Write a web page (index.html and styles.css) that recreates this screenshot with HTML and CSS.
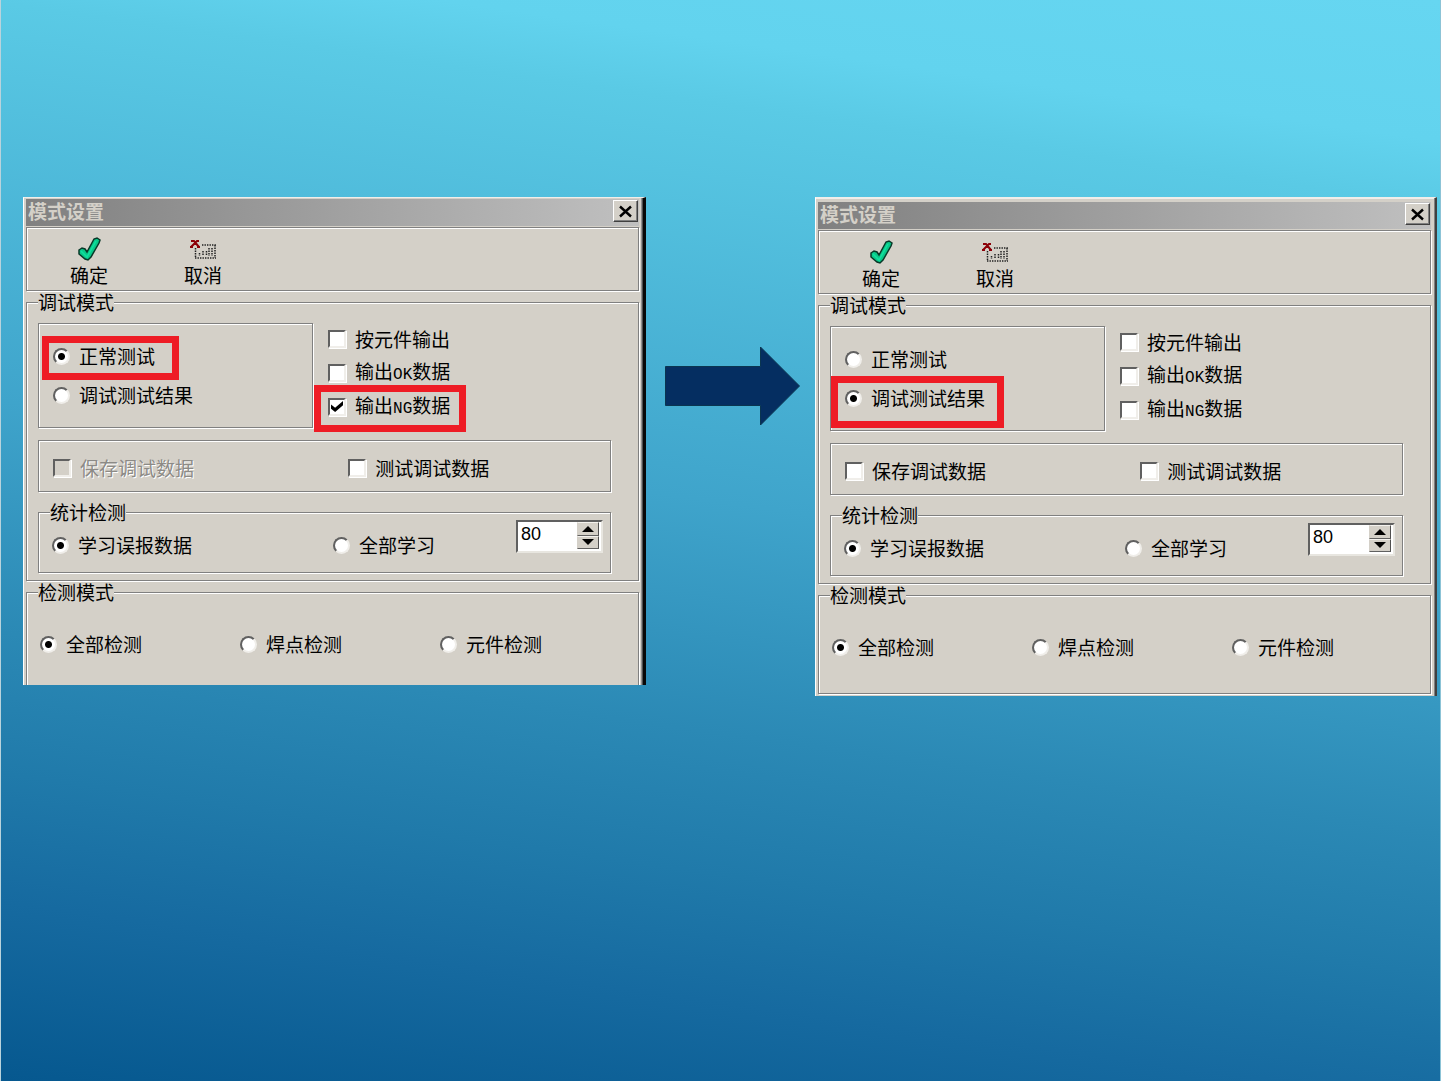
FILE: index.html
```
<!DOCTYPE html>
<html lang="zh-CN">

<head>
    <meta charset="UTF-8">
    <meta name="viewport" content="width=device-width, initial-scale=1.0">
    <title>模式设置</title>
    <link rel="stylesheet" href="styles.css">
</head>

<body>
    <main class="slide">
        <form class="dialog dialog-before">
            <header class="title-bar">
                <h2>模式设置</h2>
                <button type="button" class="close" aria-label="关闭">
                    <svg width="15" height="13" viewBox="0 0 15 13"><path d="M2 1.500L13 11.500M13 1.500L2 11.500" stroke="#000" stroke-width="2.400" /></svg>
                </button>
            </header>

            <div class="toolbar">
                <button type="button" class="tool">
                    <svg width="24" height="24" viewBox="0 0 24 24"><path d="M2 13L5 11L8 12L10 15L17 2L20 1L23 3L22 6L14 20L11 23L8 22L2 17Z" fill="#08c888" stroke="#083828" stroke-width="1.500" /><path d="M4 14L10 20L19 4" fill="none" stroke="#10e0a0" stroke-width="1.500" /></svg>
                    确定
                </button>
                <button type="button" class="tool">
                    <svg width="26" height="24" viewBox="0 0 26 24"><path d="M1 4H4L9 10M9 4H7L1 10M0 10H3M7 10H10" fill="none" stroke="#8c0008" stroke-width="2" /><path d="M12 8H26M5 21H26M5.500 11V21M25 8V21M9.500 16V19M13 14V19M16.500 14V19M19 11V19M22 11V19" fill="none" stroke="#202020" stroke-width="1.500" stroke-dasharray="1.400 1.100" /></svg>
                    取消
                </button>
            </div>

            <fieldset class="group">
                <legend>调试模式</legend>
                <div class="mode-row">
                    <div class="panel mode-panel">
                        <label class="option marked mark-normal"><input type="radio" name="mode1" checked>正常测试</label>
                        <label class="option"><input type="radio" name="mode1">调试测试结果</label>
                    </div>
                    <div class="outputs">
                        <label class="option"><input type="checkbox">按元件输出</label>
                        <label class="option"><input type="checkbox"><span>输出<span class="latin">OK</span>数据</span></label>
                        <label class="option marked mark-ng"><input type="checkbox" checked><span>输出<span class="latin">NG</span>数据</span></label>
                    </div>
                </div>
                <div class="panel data-panel">
                    <label class="option disabled"><input type="checkbox" disabled>保存调试数据</label>
                    <label class="option"><input type="checkbox">测试调试数据</label>
                </div>
                <fieldset class="group stats">
                    <legend>统计检测</legend>
                    <div class="stats-row">
                        <label class="option"><input type="radio" name="learn1" checked>学习误报数据</label>
                        <label class="option"><input type="radio" name="learn1">全部学习</label>
                        <div class="spinner">
                            <input type="number" value="80" aria-label="数量">
                            <div class="spin-buttons">
                                <button type="button" aria-label="增加"><i class="up"></i></button>
                                <button type="button" aria-label="减少"><i class="down"></i></button>
                            </div>
                        </div>
                    </div>
                </fieldset>
            </fieldset>

            <fieldset class="group detect">
                <legend>检测模式</legend>
                <div class="detect-row">
                    <label class="option"><input type="radio" name="detect1" checked>全部检测</label>
                    <label class="option"><input type="radio" name="detect1">焊点检测</label>
                    <label class="option"><input type="radio" name="detect1">元件检测</label>
                </div>
            </fieldset>
        </form>

        <svg class="arrow" width="135" height="80" viewBox="0 0 135 80"><path d="M.5 20.500H95.500V1L134.500 40L95.500 79V59.500H.5Z" fill="#052e61" stroke="#0a3550" /></svg>

        <form class="dialog dialog-after">
            <header class="title-bar">
                <h2>模式设置</h2>
                <button type="button" class="close" aria-label="关闭">
                    <svg width="15" height="13" viewBox="0 0 15 13"><path d="M2 1.500L13 11.500M13 1.500L2 11.500" stroke="#000" stroke-width="2.400" /></svg>
                </button>
            </header>

            <div class="toolbar">
                <button type="button" class="tool">
                    <svg width="24" height="24" viewBox="0 0 24 24"><path d="M2 13L5 11L8 12L10 15L17 2L20 1L23 3L22 6L14 20L11 23L8 22L2 17Z" fill="#08c888" stroke="#083828" stroke-width="1.500" /><path d="M4 14L10 20L19 4" fill="none" stroke="#10e0a0" stroke-width="1.500" /></svg>
                    确定
                </button>
                <button type="button" class="tool">
                    <svg width="26" height="24" viewBox="0 0 26 24"><path d="M1 4H4L9 10M9 4H7L1 10M0 10H3M7 10H10" fill="none" stroke="#8c0008" stroke-width="2" /><path d="M12 8H26M5 21H26M5.500 11V21M25 8V21M9.500 16V19M13 14V19M16.500 14V19M19 11V19M22 11V19" fill="none" stroke="#202020" stroke-width="1.500" stroke-dasharray="1.400 1.100" /></svg>
                    取消
                </button>
            </div>

            <fieldset class="group">
                <legend>调试模式</legend>
                <div class="mode-row">
                    <div class="panel mode-panel">
                        <label class="option"><input type="radio" name="mode2">正常测试</label>
                        <label class="option marked mark-result"><input type="radio" name="mode2" checked>调试测试结果</label>
                    </div>
                    <div class="outputs">
                        <label class="option"><input type="checkbox">按元件输出</label>
                        <label class="option"><input type="checkbox"><span>输出<span class="latin">OK</span>数据</span></label>
                        <label class="option"><input type="checkbox"><span>输出<span class="latin">NG</span>数据</span></label>
                    </div>
                </div>
                <div class="panel data-panel">
                    <label class="option"><input type="checkbox">保存调试数据</label>
                    <label class="option"><input type="checkbox">测试调试数据</label>
                </div>
                <fieldset class="group stats">
                    <legend>统计检测</legend>
                    <div class="stats-row">
                        <label class="option"><input type="radio" name="learn2" checked>学习误报数据</label>
                        <label class="option"><input type="radio" name="learn2">全部学习</label>
                        <div class="spinner">
                            <input type="number" value="80" aria-label="数量">
                            <div class="spin-buttons">
                                <button type="button" aria-label="增加"><i class="up"></i></button>
                                <button type="button" aria-label="减少"><i class="down"></i></button>
                            </div>
                        </div>
                    </div>
                </fieldset>
            </fieldset>

            <fieldset class="group detect">
                <legend>检测模式</legend>
                <div class="detect-row">
                    <label class="option"><input type="radio" name="detect2" checked>全部检测</label>
                    <label class="option"><input type="radio" name="detect2">焊点检测</label>
                    <label class="option"><input type="radio" name="detect2">元件检测</label>
                </div>
            </fieldset>
        </form>
    </main>
</body>

</html>
```
FILE: styles.css
```
* {
    box-sizing: border-box;
}

body {
    margin: 0;
    font-family: "Noto Sans CJK SC", sans-serif;
    font-size: 19px;
    line-height: 20px;
    color: #000000;
}

.slide {
    display: flex;
    align-items: flex-start;
    min-height: 100vh;
    padding: 197px 4px 40px 23px;
    background: linear-gradient(188deg, #66d6f1 0%, #62d3ee 11%, #5acae5 16%, #3fa4cb 47%, #2b89b5 65%, #207aaa 76%, #166aa0 86%, #06588f 100%);
    box-shadow: inset 1px 0 0 #b9d3dc, inset -1px 0 0 #8cc3d6;
}

.arrow {
    flex: none;
    margin: 149px 15px 0 19px;
}

/* window frame */
.dialog {
    flex: 1 1 0;
    min-width: 0;
    background-color: #d4d0c8;
    border-top: 1px solid #f0eeea;
    border-left: 1px solid #ffffff;
    white-space: nowrap;
}

.dialog-before {
    padding: 1px 4px 0 2px;
    border-right: 3px solid #080808;
    box-shadow: inset -1px 0 0 #505050, inset -2px 0 0 #909090;
    overflow: hidden;
}

.dialog-after {
    padding: 3px 4px 2px 2px;
    border-right: 2px solid #404040;
    box-shadow: inset -1px 0 0 #808080, inset 0 1px 0 #f0eeea;
}

.dialog-after .title-bar {
    margin-top: 1px;
}

.title-bar {
    display: flex;
    justify-content: space-between;
    align-items: center;
    height: 27px;
    margin-bottom: 1px;
    padding: 0 1px 3px 2px;
    background: linear-gradient(90deg, #808080, #c0c0c0);
}

.title-bar h2 {
    margin: 0;
    font-size: 19px;
    line-height: 20px;
    color: #d4d0c8;
}

button {
    margin: 0;
    padding: 0;
    background-color: #d4d0c8;
    font: inherit;
    color: inherit;
}

.close {
    display: flex;
    justify-content: center;
    align-items: center;
    width: 25px;
    height: 22px;
    border: 1px solid;
    border-color: #ffffff #404040 #404040 #ffffff;
    box-shadow: inset -1px -1px 0 #808080;
}

/* etched lines: grey with a white line beside it */
.toolbar,
.panel,
.group {
    border: 1px solid #808080;
    box-shadow: 1px 1px 0 #ffffff, inset 1px 1px 0 #ffffff;
}

.toolbar {
    display: flex;
    padding: 9px 5px 5px;
}

.tool {
    display: flex;
    flex-direction: column;
    align-items: center;
    gap: 4px;
    width: 114px;
    border: none;
}

.group {
    min-width: 0;
    margin: 1px 0 0;
    padding: 11px 27px 7px 11px;
}

.group legend {
    height: 20px;
    padding: 0;
    background-color: #d4d0c8;
}

.mode-row {
    display: flex;
}

.mode-panel {
    display: flex;
    flex-direction: column;
    align-items: flex-start;
    gap: 19px;
    width: 48%;
    height: 105px;
    padding: 22px 0 0 14px;
}

.outputs {
    display: flex;
    flex-direction: column;
    align-items: flex-start;
    gap: 14px;
    padding: 6px 0 0 15px;
}

.option {
    display: flex;
    align-items: center;
    gap: 9px;
    height: 20px;
}

.latin {
    font-family: "Liberation Mono", monospace;
    font-size: 16px;
}

.disabled {
    color: #8c8a86;
    text-shadow: 1px 1px 0 #ffffff;
}

.data-panel {
    display: grid;
    grid-template-columns: 53% 1fr;
    height: 52px;
    margin-top: 12px;
    padding: 17px 0 0 14px;
}

.stats {
    margin-top: 10px;
    padding: 0 7px 17px 13px;
}

.stats legend {
    margin-left: -2px;
}

.stats-row {
    display: grid;
    grid-template-columns: 51% 1fr auto;
    margin-top: -2px;
}

.stats-row .option {
    margin-top: 15px;
}

.detect {
    padding: 32px 0 36px 11px;
}

/* the first window is cut off before its lower edge */
.dialog-before .detect {
    margin-bottom: -1px;
    padding-bottom: 32px;
    border-bottom: none;
}

.detect-row {
    display: grid;
    grid-template-columns: 200px 200px 1fr;
    padding-left: 2px;
}

/* check boxes and radios */
input[type="checkbox"],
input[type="radio"] {
    appearance: none;
    flex: none;
    margin: 0;
    background-color: #ffffff;
    border: 2px solid;
    border-color: #606060 #f0eeea #f0eeea #606060;
}

input[type="checkbox"] {
    width: 18px;
    height: 18px;
    box-shadow: 1px 1px 0 #ffffff;
}

input[type="radio"] {
    width: 17px;
    height: 17px;
    border-radius: 50%;
}

input[type="radio"]:checked {
    background-image: radial-gradient(circle, #000000 3px, transparent 4px);
}

input[type="checkbox"]:checked::before {
    content: "";
    display: block;
    width: 12px;
    height: 11px;
    margin: 1px;
    background-color: #000000;
    clip-path: polygon(0 32%, 34% 62%, 100% 0, 100% 38%, 34% 100%, 0 70%);
}

input[type="checkbox"]:disabled {
    background-color: #d4d0c8;
}

/* number box */
.spinner {
    display: flex;
    width: 87px;
    height: 33px;
    padding-right: 2px;
    background-color: #ffffff;
    border: 2px solid;
    border-color: #606060 #e8e6e0 #e8e6e0 #606060;
}

.spinner input {
    appearance: textfield;
    flex: 1;
    min-width: 0;
    height: 24px;
    padding: 0 0 0 3px;
    border: none;
    outline: none;
    font-family: "Liberation Sans", sans-serif;
    font-size: 18px;
}

.spinner input::-webkit-inner-spin-button {
    appearance: none;
    margin: 0;
}

.spin-buttons {
    display: flex;
    flex-direction: column;
    width: 22px;
    height: 27px;
}

.spin-buttons button {
    display: flex;
    flex: 1;
    justify-content: center;
    align-items: center;
    border: 1px solid;
    border-color: #f4f2ee #505050 #606060 #d4d0c8;
}

.up,
.down {
    border: 6px solid transparent;
}

.up {
    border-top: none;
    border-bottom: 6px solid #000000;
}

.down {
    border-bottom: none;
    border-top: 6px solid #000000;
}

/* red boxes drawn over the options */
.marked {
    position: relative;
}

.marked::after {
    content: "";
    position: absolute;
    border: 7px solid #ee1c25;
}

.mark-normal::after {
    inset: -10px -24px -14px -11px;
}

.mark-ng::after {
    inset: -12px -16px -15px -14px;
}

.mark-result::after {
    inset: -12px -19px -20px -14px;
}
```
